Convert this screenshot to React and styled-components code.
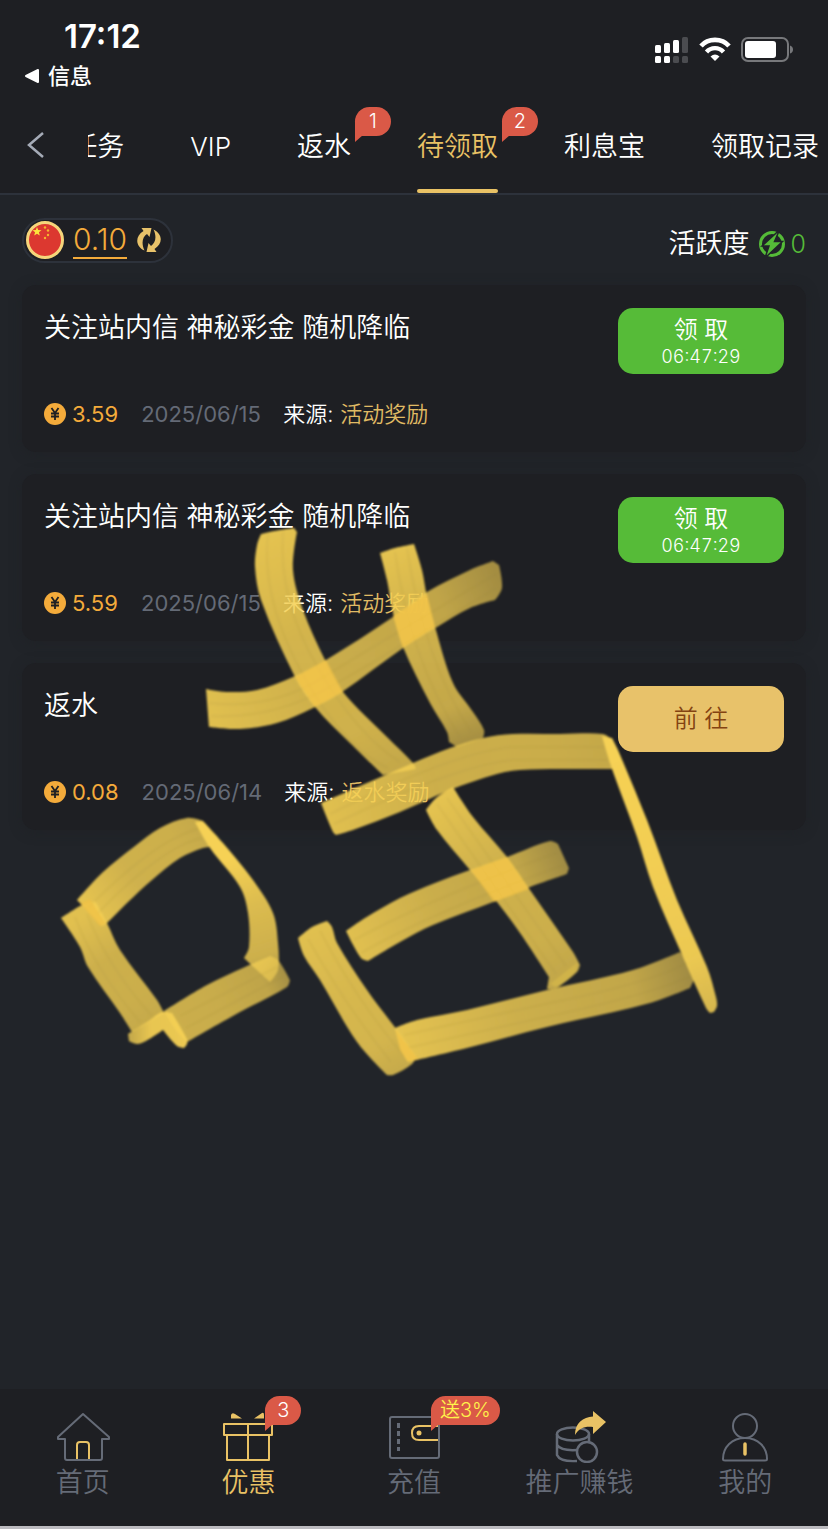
import React from 'react'
import styled, { createGlobalStyle } from 'styled-components'

const GlobalStyle = createGlobalStyle`
  * {
    box-sizing: border-box;
  }

  body {
    margin: 0;
    background: #212429;
    color: #ffffff;
    font-family: Inter, 'Noto Sans CJK SC', sans-serif;
    font-weight: 350;
  }

  button {
    font: inherit;
    border: 0;
    cursor: pointer;
  }

  a {
    color: inherit;
    text-decoration: none;
  }

  svg {
    display: block;
    flex: none;
  }
`
const Page = styled.div`
  position: relative;
  display: flex;
  flex-direction: column;
  min-height: 100vh;
  overflow-x: hidden;
`
const Header = styled.header`
  background: #1e1f23;
  border-bottom: 2px solid #2d323b;
`
const StatusBar = styled.div`
  display: flex;
  justify-content: space-between;
  align-items: center;
  height: 97px;
  padding: 0 34px 0 24px;
`
const StatusLeft = styled.div`
  display: flex;
  flex-direction: column;
  gap: 4px;
  padding-top: 11px;
`
const Clock = styled.time`
  padding-left: 40px;
  font-size: 33px;
  line-height: 40px;
  font-weight: 600;
`
const BackApp = styled.a`
  display: flex;
  align-items: center;
  gap: 8px;
  font-size: 22px;
  line-height: 32px;
  font-weight: 500;
`
const StatusIcons = styled.div`
  display: flex;
  align-items: center;
  gap: 10px;
  padding-top: 2px;
`
const TabBar = styled.nav`
  display: flex;
  height: 96px;
`
const BackButton = styled.button`
  display: flex;
  align-items: center;
  flex: none;
  width: 88px;
  padding: 0 0 0 26px;
  background: none;
`
const Tabs = styled.div`
  display: flex;
  flex: 1;
  justify-content: flex-end;
  gap: 66px;
  min-width: 0;
  padding-right: 9px;
  overflow: hidden;
`
const Tab = styled.a`
  position: relative;
  display: flex;
  align-items: center;
  flex: none;
  padding-top: 4px;
  font-size: ${({ $latin }) => ($latin ? 26 : 27)}px;
  line-height: 40px;
  white-space: nowrap;
  color: ${({ $active }) => ($active ? '#e9c265' : '#ffffff')};

  &::after {
    content: '';
    position: absolute;
    left: 0;
    right: 0;
    bottom: 0;
    height: 4px;
    border-radius: 2px;
    background: ${({ $active }) => ($active ? '#e9c265' : 'none')};
  }
`
const Badge = styled.span`
  position: absolute;
  top: ${({ $nav }) => ($nav ? 7 : 10)}px;
  left: ${({ $nav }) => ($nav ? 'calc(50% + 17px)' : 'calc(100% + 4px)')};
  min-width: 36px;
  padding: 0 9px;
  border-radius: 15px 15px 15px 0;
  background: #da5947;
  color: ${({ $promo }) => ($promo ? '#fff34a' : '#ffffff')};
  font-size: 20px;
  line-height: 29px;
  text-align: center;
  white-space: nowrap;

  &::after {
    content: '';
    position: absolute;
    left: 0;
    top: 28px;
    border-top: 7px solid #da5947;
    border-right: 8px solid transparent;
  }
`
const Main = styled.main`
  flex: 1;
  padding: 21px 22px 40px;
`
const Summary = styled.div`
  display: flex;
  justify-content: space-between;
  align-items: center;
  margin-bottom: 21px;
`
const Balance = styled.div`
  display: flex;
  align-items: center;
  height: 45px;
  padding: 0 9px 0 2px;
  border: 2px solid #2d323b;
  border-radius: 23px;
  background: #1e1f23;
`
const BalanceAmount = styled.span`
  height: 37px;
  margin: 0 9px;
  border-bottom: 2px solid #f4ab3b;
  color: #f4ab3b;
  font-size: 30px;
  line-height: 35px;
`
const RefreshButton = styled.button`
  padding: 0;
  background: none;
`
const Activity = styled.div`
  display: flex;
  align-items: center;
  padding-top: 8px;
  font-size: 27px;
  line-height: 40px;

  svg {
    margin: 0 5px 0 8px;
  }
`
const ActivityCount = styled.span`
  color: #55bb38;
  font-size: 25px;
`
const RewardList = styled.ul`
  display: flex;
  flex-direction: column;
  gap: 22px;
  margin: 0;
  padding: 0;
  list-style: none;
`
const Card = styled.li`
  display: flex;
  justify-content: space-between;
  align-items: flex-start;
  padding: 23px 22px 22px;
  border-radius: 14px;
  background: #1e1f23;
  box-shadow: 0 2px 12px rgba(30, 31, 35, 0.5);
`
const CardInfo = styled.div`
  display: flex;
  flex-direction: column;
  gap: 50px;
`
const CardTitle = styled.h2`
  margin: 0;
  font-size: 27px;
  line-height: 40px;
  font-weight: 350;
`
const Meta = styled.div`
  display: flex;
  align-items: center;
  font-size: 22px;
  line-height: 32px;
`
const Amount = styled.span`
  display: flex;
  align-items: center;
  gap: 6px;
  min-width: 74px;
  color: #f4ab3b;
  font-weight: 400;
`
const DateText = styled.time`
  min-width: 120px;
  margin: 0 22px 0 23px;
  color: #646a76;
  font-weight: 400;
`
const Source = styled.span`
  span {
    margin-left: 7px;
    color: #e0bb64;
  }
`
const ActionButton = styled.button`
  display: flex;
  flex-direction: column;
  justify-content: center;
  align-items: center;
  width: 166px;
  height: 66px;
  border-radius: 15px;
  background: ${({ $gold }) => ($gold ? '#e8c26a' : '#56bb38')};
  color: ${({ $gold }) => ($gold ? '#834312' : '#ffffff')};
  font-size: 24px;
  line-height: 32px;

  small {
    font-size: 18px;
    line-height: 22px;
    font-variant-numeric: tabular-nums;
  }
`
const BottomNav = styled.nav`
  display: grid;
  grid-template-columns: repeat(5, 1fr);
  height: 140px;
  border-bottom: 3px solid #bcbbbf;
  background: #1e1f23;
`
const NavItem = styled.a`
  position: relative;
  display: flex;
  flex-direction: column;
  align-items: center;
  padding-top: 20px;
  color: ${({ $active }) => ($active ? '#e9c265' : '#656b77')};
  font-size: 27px;
  line-height: 40px;
`
const Scribble = styled.svg`
  position: absolute;
  top: 500px;
  left: 0;
  pointer-events: none;
`

const tabs = [
  { name: '任务' },
  { name: 'VIP', latin: true },
  { name: '返水', badge: 1 },
  { name: '待领取', badge: 2, active: true },
  { name: '利息宝' },
  { name: '领取记录' }
]

const rewards = [
  {
    id: 1,
    title: '关注站内信 神秘彩金 随机降临',
    amount: '3.59',
    date: '2025/06/15',
    source: '活动奖励',
    timer: '06:47:29'
  },
  {
    id: 2,
    title: '关注站内信 神秘彩金 随机降临',
    amount: '5.59',
    date: '2025/06/15',
    source: '活动奖励',
    timer: '06:47:29'
  },
  {
    id: 3,
    title: '返水',
    amount: '0.08',
    date: '2025/06/14',
    source: '返水奖励'
  }
]

// brush strokes: outline points, fade direction [x1, y1, x2, y2], start, middle and end opacity
const strokes = [
  {
    fade: [275, 530, 400, 770],
    from: 0.92,
    mid: 0.84,
    to: 0.77,
    points: '261,534 275,531 294,528 297,532 293,570 303,610 325,660 343,692 387,737 413,763 416,769 383,775 350,743 315,707 295,677 261,600 255,567 257,545'
  },
  {
    fade: [207, 710, 500, 580],
    from: 0.9,
    mid: 0.8,
    to: 0.62,
    points: '206,689 227,692 257,690 293,677 326,660 393,617 427,592 470,570 493,561 499,565 502,588 495,600 470,608 437,627 403,648 342,692 313,708 277,723 240,729 209,727'
  },
  {
    fade: [397, 548, 470, 745],
    from: 0.92,
    mid: 0.82,
    to: 0.62,
    points: '380,553 395,548 414,544 422,570 427,597 435,627 453,683 473,712 484,730 483,738 457,747 449,742 447,732 430,703 403,647 393,613 387,580'
  },
  {
    fade: [328, 820, 600, 750],
    from: 0.9,
    mid: 0.81,
    to: 0.78,
    points: '321,803 367,783 413,763 450,748 483,738 513,734 560,734 603,734 612,740 613,769 560,769 520,770 497,774 450,790 400,812 353,830 336,835 333,832'
  },
  {
    fade: [610, 740, 712, 1012],
    from: 1,
    mid: 0.99,
    to: 0.85,
    points: '602,736 612,738 618,750 647,820 677,900 707,967 716,997 717,1006 714,1012 710,1013 706,1008 683,957 653,887 637,837 612,769'
  },
  {
    fade: [440, 800, 560, 980],
    from: 0.92,
    mid: 0.82,
    to: 0.76,
    points: '426,810 436,798 453,787 473,817 507,857 530,890 573,952 580,965 577,972 556,988 547,989 549,977 520,933 497,902 470,870 437,830'
  },
  {
    fade: [355, 948, 565, 860],
    from: 0.9,
    mid: 0.8,
    to: 0.6,
    points: '346,931 365,918 400,898 435,883 470,870 507,857 550,841 558,844 569,868 567,874 530,887 493,902 433,925 400,942 368,961 361,958'
  },
  {
    fade: [315, 930, 400, 1070],
    from: 0.9,
    mid: 0.86,
    to: 0.78,
    points: '298,938 312,927 327,921 332,927 337,943 367,990 397,1030 416,1056 412,1064 393,1075 387,1075 357,1042 320,980 304,956'
  },
  {
    fade: [397, 1040, 690, 970],
    from: 0.92,
    mid: 0.81,
    to: 0.6,
    points: '395,1028 417,1020 467,1010 547,990 633,970 680,952 686,960 694,980 690,988 650,1003 547,1027 467,1048 408,1062 401,1050'
  },
  {
    fade: [90, 910, 200, 830],
    from: 0.92,
    mid: 0.82,
    to: 0.78,
    points: '77,900 103,872 135,846 160,828 187,818 203,821 211,847 203,848 180,858 152,880 127,903 107,923 102,926 90,913'
  },
  {
    fade: [225, 860, 265, 982],
    from: 1,
    mid: 0.88,
    to: 0.6,
    points: '195,822 203,821 223,843 253,880 273,913 278,943 278,970 270,982 259,972 244,958 249,947 248,913 240,887 210,848'
  },
  {
    fade: [80, 920, 145, 1020],
    from: 0.9,
    mid: 0.81,
    to: 0.78,
    points: '61,918 82,905 95,901 107,923 120,950 157,1000 164,1013 132,1032 120,1013 88,967 80,947'
  },
  {
    fade: [175, 1030, 285, 970],
    from: 0.8,
    mid: 0.79,
    to: 0.62,
    points: '164,1011 207,985 245,967 270,956 278,960 290,980 287,987 240,1012 187,1042 176,1030'
  },
  {
    fade: [128, 1040, 185, 1040],
    from: 0.75,
    mid: 0.94,
    to: 0.96,
    points: '128,1034 150,1020 162,1012 172,1013 187,1039 187,1044 184,1048 177,1046 163,1030 146,1041 137,1044 129,1041'
  }
]

const angle = (a, b) => Math.atan2(b[1] - a[1], b[0] - a[0])

// curve through the points, sharp turns stay corners
const smooth = text => {
  const p = text.split(' ').map(pair => pair.split(',').map(Number))
  const at = i => p[(i + p.length) % p.length]
  const tangent = i => {
    const turn = Math.cos(angle(at(i), at(i + 1)) - angle(at(i - 1), at(i)))
    const dir = angle(at(i - 1), at(i + 1))
    return turn < 0.75 ? [0, 0] : [Math.cos(dir), Math.sin(dir)]
  }
  let d = `M${at(0)}`
  p.forEach((cur, i) => {
    const next = at(i + 1)
    const len = Math.hypot(next[0] - cur[0], next[1] - cur[1]) / 3
    const t1 = tangent(i)
    const t2 = tangent(i + 1)
    const c1 = [cur[0] + t1[0] * len, cur[1] + t1[1] * len]
    const c2 = [next[0] - t2[0] * len, next[1] - t2[1] * len]
    d += ` C${c1} ${c2} ${next}`
  })
  return d + 'Z'
}

const Drawing = () => (
  <Scribble width="828" height="600" viewBox="0 500 828 600" aria-hidden="true">
    <defs>
      <filter id="soft">
        <feGaussianBlur stdDeviation="1" />
      </filter>
      {strokes.map(({ fade, from, mid, to }, i) => (
        <linearGradient
          key={i}
          id={`fade${i}`}
          gradientUnits="userSpaceOnUse"
          x1={fade[0]}
          y1={fade[1]}
          x2={fade[2]}
          y2={fade[3]}
        >
          <stop stopColor="#f6d154" stopOpacity={from} />
          <stop offset="0.4" stopColor="#f5d054" stopOpacity={mid} />
          <stop offset="0.8" stopColor="#f5d054" stopOpacity={(mid * 3 + to) / 4} />
          <stop offset="1" stopColor="#f5d054" stopOpacity={to} />
        </linearGradient>
      ))}
    </defs>
    <g filter="url(#soft)">
      {strokes.map(({ points }, i) => (
        <path key={i} d={smooth(points)} fill={`url(#fade${i})`} />
      ))}
      <g fill="none" stroke="#8d7932" strokeOpacity="0.07" strokeWidth="3">
        <path d="M268 534Q261 600 303 675T388 768" />
        <path d="M283 532Q278 600 318 668T400 762" />
        <path d="M209 703Q270 710 322 678T496 574" />
        <path d="M211 716Q272 719 328 688T496 588" />
        <path d="M395 552Q410 660 460 737" />
        <path d="M407 548Q424 660 471 732" />
        <path d="M330 814Q450 754 510 747H604" />
        <path d="M334 824Q452 767 512 760H608" />
        <path d="M437 804L556 974" />
        <path d="M447 798L566 966" />
        <path d="M354 940Q430 899 556 853" />
        <path d="M361 953Q432 912 564 865" />
        <path d="M308 939Q345 1005 391 1062" />
        <path d="M320 931Q357 1001 404 1056" />
        <path d="M404 1035L550 1003Q650 983 687 963" />
        <path d="M407 1048L550 1016Q652 994 691 976" />
        <path d="M88 908Q155 840 198 829" />
        <path d="M97 914Q163 846 202 838" />
        <path d="M75 917Q95 970 140 1022" />
        <path d="M87 914Q107 966 152 1016" />
        <path d="M180 1016L277 967" />
        <path d="M186 1028L282 977" />
      </g>
      <g fill="#efc046" fillOpacity="0.8">
        <path d="M295 677L326 660L343 692L315 707Z" />
        <path d="M393 616L427 594L435 627L403 648Z" />
        <path d="M471 870L507 857L529 889L494 902Z" />
        <path d="M396 1030L418 1059L408 1062L400 1050Z" />
        <path d="M80 903L90 899L106 924L100 926Z" />
      </g>
      <path d="M550 984L578 962L576 972L558 988Z" fill="#e6c54c" fillOpacity="0.4" />
    </g>
  </Scribble>
)

const SignalIcon = () => (
  <svg width="34" height="26" viewBox="0 0 34 26" fill="#ffffff">
    <rect x="0" y="8" width="6" height="8" rx="1.5" />
    <rect x="9" y="6" width="6" height="10" rx="1.5" />
    <rect x="18" y="3" width="6" height="13" rx="1.5" />
    <rect x="27" y="0" width="6" height="16" rx="1.5" fill="#4b4c50" />
    <rect x="0" y="19" width="6" height="7" rx="1.5" />
    <rect x="9" y="19" width="6" height="7" rx="1.5" />
    <rect x="18" y="19" width="6" height="7" rx="1.5" fill="#4b4c50" />
    <rect x="27" y="19" width="6" height="7" rx="1.5" fill="#4b4c50" />
  </svg>
)

const WifiIcon = () => (
  <svg width="32" height="25" viewBox="0 0 32 25" fill="none" stroke="#ffffff">
    <path d="M2 9C9 .8 23 .8 30 9" strokeWidth="4.6" />
    <path d="M7.5 15C12 9.8 20 9.8 24.500 15" strokeWidth="4.4" />
    <path d="M11.500 19.500Q16 15.500 20.500 19.500L16 24Z" fill="#ffffff" stroke="none" />
  </svg>
)

const BatteryIcon = () => (
  <svg width="53" height="26" viewBox="0 0 53 26">
    <rect x="1" y="1" width="46" height="23" rx="6" fill="none" stroke="#77787b" strokeWidth="2" />
    <rect x="4" y="4" width="31" height="17" rx="3" fill="#ffffff" />
    <path d="M49 8.500Q52 9.500 52 12.500T49 16.500Z" fill="#77787b" />
  </svg>
)

const FlagIcon = () => (
  <svg width="38" height="38" viewBox="0 0 38 38">
    <circle cx="19" cy="19" r="17.500" fill="#dc3830" stroke="#f6d57a" strokeWidth="3" />
    <path
      d="M11 6l1.200 3.100 3.300.1-2.600 2.100.9 3.200-2.800-1.800-2.800 1.800.9-3.200-2.600-2.100 3.300-.1z"
      fill="#fce43c"
    />
    <g fill="#f5b62d">
      <circle cx="19" cy="6.500" r="1.200" />
      <circle cx="22" cy="9.500" r="1.200" />
      <circle cx="22" cy="14" r="1.200" />
      <circle cx="19" cy="17" r="1.200" />
    </g>
  </svg>
)

const RefreshIcon = () => (
  <svg width="26" height="26" viewBox="0 0 26 26" fill="#e8c26a">
    <path d="M5.500 1H15.500L13.500 10L11 7C6.500 10 5 16 8.500 23.500C-1 19 -1 9 7.500 4Z" />
    <path d="M20.500 25H10.500L12.500 16L15 19C19.500 16 21 10 17.500 2.500C27 7 27 17 18.500 22Z" />
  </svg>
)

const BoltIcon = () => (
  <svg width="28" height="28" viewBox="0 0 28 28">
    <circle cx="14" cy="14" r="11.500" fill="none" stroke="#55bb38" strokeWidth="3" />
    <path
      d="M21.500 0L4 16H11L7 28L24.500 11.500H16.500Z"
      fill="#55bb38"
      stroke="#212429"
      strokeWidth="1.500"
    />
  </svg>
)

const CoinIcon = () => (
  <svg width="22" height="22" viewBox="0 0 22 22">
    <circle cx="11" cy="11" r="11" fill="#f4ab3b" />
    <path
      d="M7.500 5L11 10L14.500 5M11 10V17M7 10.500H15M7 13.500H15"
      fill="none"
      stroke="#1e1f23"
      strokeWidth="1.800"
    />
  </svg>
)

const HomeIcon = () => (
  <svg width="54" height="54" viewBox="0 0 54 54" fill="none" stroke="#656b77" strokeWidth="2" strokeLinejoin="round">
    <path d="M27 5L2 28V30H9V49Q9 51 11 51H44Q46 51 46 49V30H53V28Z" />
    <path d="M21 50V36Q21 33 24 33H30Q33 33 33 36V50" stroke="#e9c265" />
  </svg>
)

const GiftIcon = () => (
  <svg width="54" height="54" viewBox="0 0 54 54" fill="none" stroke="#e9c265" strokeWidth="2" strokeLinejoin="round">
    <path d="M3 15H51V26H3ZM6 26V51H48V26M27 15V51" />
    <path d="M10 9.500V6Q11 3 14 5L21 9.500ZM33 9.500L41 4Q43 3 43 6V9.500Z" fill="#e9c265" stroke="none" />
  </svg>
)

const WalletIcon = () => (
  <svg width="54" height="54" viewBox="0 0 54 54" fill="none" stroke="#656b77" strokeWidth="2">
    <rect x="3" y="8" width="49" height="41" rx="2" />
    <path d="M11.500 14V42" strokeWidth="3" strokeDasharray="5 3" />
    <path d="M51 17H32Q25 17 25 24T32 31H51" stroke="#e9c265" />
    <circle cx="32" cy="24" r="2.500" fill="#e9c265" stroke="none" />
  </svg>
)

const ShareIcon = () => (
  <svg width="54" height="54" viewBox="0 0 54 54" fill="none" stroke="#656b77" strokeWidth="2.500">
    <ellipse cx="20" cy="25" rx="16" ry="6.500" />
    <path d="M4 25V46Q7 53 24 52M36 25V35M4 36Q8 42 24 41" />
    <circle cx="34" cy="43" r="10" fill="#1e1f23" />
    <path d="M22 26C22 14 30 8 40 7.500V2L53 13L40 25V18C32 17 26 19 22 26Z" fill="#e9c265" stroke="none" />
  </svg>
)

const UserIcon = () => (
  <svg width="54" height="54" viewBox="0 0 54 54" fill="none" stroke="#656b77" strokeWidth="2">
    <circle cx="27" cy="17" r="12" />
    <path d="M27 29C14 29 5 38 5 50Q5 51.500 7 51.500H47Q49 51.500 49 50C49 38 40 29 27 29Z" />
    <path d="M27 35V45" stroke="#e9c265" strokeWidth="3.500" strokeLinecap="round" />
  </svg>
)

const navItems = [
  { name: '首页', Icon: HomeIcon },
  { name: '优惠', Icon: GiftIcon, badge: '3', active: true },
  { name: '充值', Icon: WalletIcon, badge: '送3%', promo: true },
  { name: '推广赚钱', Icon: ShareIcon },
  { name: '我的', Icon: UserIcon }
]

export default function App() {
  return (
    <Page>
      <GlobalStyle />
      <Header>
        <StatusBar>
          <StatusLeft>
            <Clock>17:12</Clock>
            <BackApp href="#messages">
              <svg width="16" height="16" viewBox="0 0 16 16">
                <path d="M2 8L14 2V14Z" fill="#ffffff" stroke="#ffffff" strokeWidth="2" strokeLinejoin="round" />
              </svg>
              信息
            </BackApp>
          </StatusLeft>
          <StatusIcons>
            <SignalIcon />
            <WifiIcon />
            <BatteryIcon />
          </StatusIcons>
        </StatusBar>
        <TabBar>
          <BackButton aria-label="返回">
            <svg width="19" height="28" viewBox="0 0 19 28">
              <path d="M17 2L3 14L17 26" fill="none" stroke="#a5abb7" strokeWidth="2.500" />
            </svg>
          </BackButton>
          <Tabs>
            {tabs.map(({ name, badge, active, latin }) => (
              <Tab key={name} href={`#${name}`} $active={active} $latin={latin}>
                {name}
                {badge && <Badge>{badge}</Badge>}
              </Tab>
            ))}
          </Tabs>
        </TabBar>
      </Header>
      <Main>
        <Summary>
          <Balance>
            <FlagIcon />
            <BalanceAmount>0.10</BalanceAmount>
            <RefreshButton aria-label="刷新">
              <RefreshIcon />
            </RefreshButton>
          </Balance>
          <Activity>
            活跃度
            <BoltIcon />
            <ActivityCount>0</ActivityCount>
          </Activity>
        </Summary>
        <RewardList>
          {rewards.map(({ id, title, amount, date, source, timer }) => (
            <Card key={id}>
              <CardInfo>
                <CardTitle>{title}</CardTitle>
                <Meta>
                  <Amount>
                    <CoinIcon />
                    {amount}
                  </Amount>
                  <DateText>{date}</DateText>
                  <Source>
                    来源:<span>{source}</span>
                  </Source>
                </Meta>
              </CardInfo>
              <ActionButton $gold={!timer}>
                {timer ? '领 取' : '前 往'}
                {timer && <small>{timer}</small>}
              </ActionButton>
            </Card>
          ))}
        </RewardList>
      </Main>
      <BottomNav>
        {navItems.map(({ name, Icon, badge, active, promo }) => (
          <NavItem key={name} href={`#${name}`} $active={active}>
            <Icon />
            {name}
            {badge && (
              <Badge $nav $promo={promo}>
                {badge}
              </Badge>
            )}
          </NavItem>
        ))}
      </BottomNav>
      <Drawing />
    </Page>
  )
}
